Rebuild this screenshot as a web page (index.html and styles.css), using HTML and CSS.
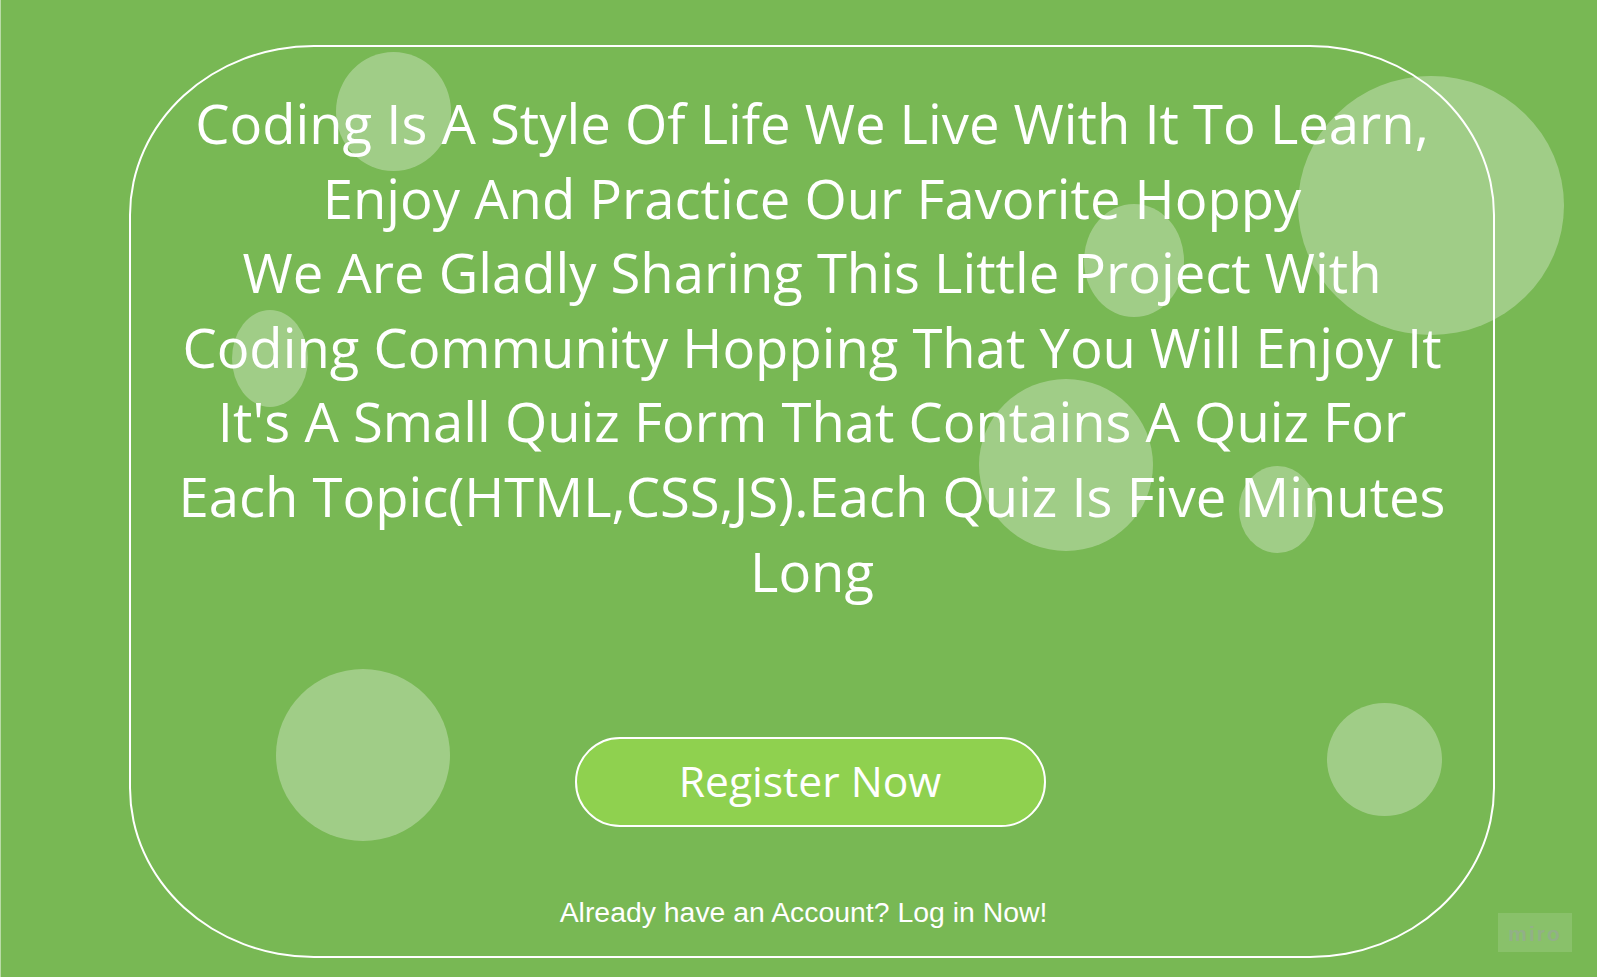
FILE: index.html
```html
<!DOCTYPE html>
<html lang="en">
<head>
<meta charset="utf-8">
<title>Quiz</title>
<link rel="stylesheet" href="styles.css">
</head>
<body>
<div class="page">
  <div class="bubble b1"></div>
  <div class="bubble b2"></div>
  <div class="bubble b3"></div>
  <div class="bubble b4"></div>
  <div class="bubble b5"></div>
  <div class="bubble b6"></div>
  <div class="bubble b7"></div>
  <div class="bubble b8"></div>
  <main class="card">
    <p class="intro">Coding Is A Style Of Life We Live With It To Learn,<br>Enjoy And Practice Our Favorite Hoppy<br>We Are Gladly Sharing This Little Project With<br>Coding Community Hopping That You Will Enjoy It<br>It's A Small Quiz Form That Contains A Quiz For<br>Each Topic(HTML,CSS,JS).Each Quiz Is Five Minutes<br>Long</p>
    <a class="register" href="#">Register Now</a>
    <a class="login" href="#">Already have an Account? Log in Now!</a>
  </main>
  <div class="miro">miro</div>
</div>
</body>
</html>
```
FILE: styles.css
```css
html, body {
  margin: 0;
  padding: 0;
}
body {
  background: #78b854;
  width: 1597px;
  height: 977px;
  overflow: hidden;
}
.page {
  position: relative;
  width: 1597px;
  height: 977px;
  box-sizing: border-box;
  padding: 45px 0 0 128px;
  border-left: 1px solid #b9dba6;
}
.card {
  box-sizing: border-box;
  width: 1366px;
  height: 913px;
  border: 2px solid #ffffff;
  border-radius: 185px / 170px;
  display: flex;
  flex-direction: column;
  align-items: center;
  padding-top: 39px;
  position: relative;
  z-index: 1;
}
.intro {
  margin: 0;
  font-family: "Open Sans", "DejaVu Sans", sans-serif;
  font-size: 54.4px;
  line-height: 74.6px;
  color: #ffffff;
  text-align: center;
  white-space: nowrap;
}
.register {
  margin-top: 129px;
  margin-right: 4px;
  box-sizing: border-box;
  width: 471px;
  height: 90px;
  padding-bottom: 5px;
  border: 2px solid #ffffff;
  border-radius: 45px;
  background: #8fd14f;
  color: #ffffff;
  text-decoration: none;
  font-family: "Open Sans", "DejaVu Sans", sans-serif;
  font-size: 42.6px;
  display: flex;
  align-items: center;
  justify-content: center;
}
.login {
  margin-top: 69px;
  margin-right: 17px;
  font-family: "Liberation Sans", Arial, sans-serif;
  font-size: 28.4px;
  line-height: 32px;
  color: #ffffff;
  text-decoration: none;
}
.bubble {
  position: absolute;
  border-radius: 50%;
  background: rgba(255, 255, 255, 0.3);
  z-index: 0;
}
.b1 { left: 335px; top: 52px; width: 115px; height: 119px; }
.b2 { left: 1297px; top: 76px; width: 266px; height: 259px; }
.b3 { left: 1083px; top: 204px; width: 100px; height: 113px; }
.b4 { left: 231px; top: 310px; width: 76px; height: 97px; }
.b5 { left: 978px; top: 379px; width: 174px; height: 172px; }
.b6 { left: 1238px; top: 466px; width: 77px; height: 87px; }
.b7 { left: 275px; top: 669px; width: 174px; height: 172px; }
.b8 { left: 1326px; top: 703px; width: 115px; height: 113px; }
.miro {
  position: absolute;
  right: 25px;
  bottom: 25px;
  width: 74px;
  height: 39px;
  background: rgba(255, 255, 255, 0.13);
  color: #92b087;
  font-family: "Liberation Sans", Arial, sans-serif;
  font-weight: bold;
  font-size: 21px;
  letter-spacing: 2px;
  display: flex;
  align-items: center;
  justify-content: center;
  padding-top: 2px;
  box-sizing: border-box;
}
```
